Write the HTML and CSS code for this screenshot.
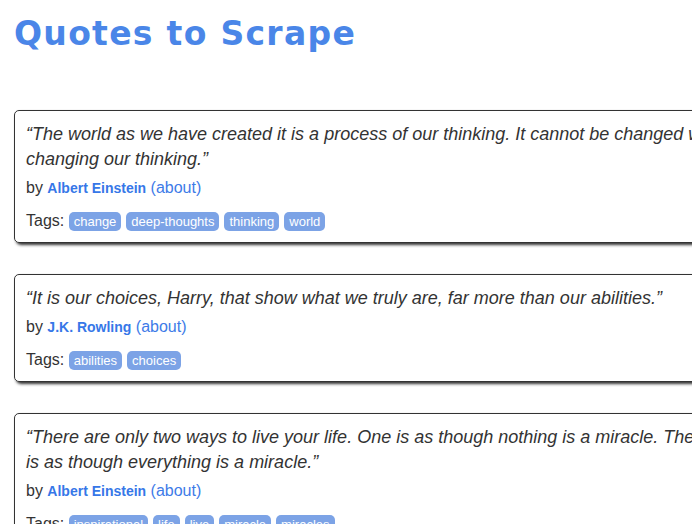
FILE: index.html
```html
<!DOCTYPE html>
<html>
<head>
<meta charset="utf-8">
<link rel="stylesheet" href="styles.css">
</head>
<body>
<div class="container">
  <h1 class="title">Quotes to Scrape</h1>
  <div class="quotes">
    <div class="quote">
      <span class="text">“The world as we have created it is a process of our thinking. It cannot be changed without changing our thinking.”</span>
      <span class="by">by <a class="author">Albert Einstein</a> <a class="about">(about)</a></span>
      <div class="tags">Tags: <a class="tag">change</a><a class="tag">deep-thoughts</a><a class="tag">thinking</a><a class="tag">world</a></div>
    </div>
    <div class="quote">
      <span class="text">“It is our choices, Harry, that show what we truly are, far more than our abilities.”</span>
      <span class="by">by <a class="author">J.K. Rowling</a> <a class="about">(about)</a></span>
      <div class="tags">Tags: <a class="tag">abilities</a><a class="tag">choices</a></div>
    </div>
    <div class="quote">
      <span class="text">“There are only two ways to live your life. One is as though nothing is a miracle. The other is as though everything is a miracle.”</span>
      <span class="by">by <a class="author">Albert Einstein</a> <a class="about">(about)</a></span>
      <div class="tags">Tags: <a class="tag">inspirational</a><a class="tag">life</a><a class="tag">live</a><a class="tag">miracle</a><a class="tag">miracles</a></div>
    </div>
  </div>
</div>
</body>
</html>
```

FILE: styles.css
```css
html, body {
  margin: 0;
  padding: 0;
  overflow: hidden;
  background: #fff;
}
body {
  font-family: "Liberation Sans", Arial, sans-serif;
  color: #333;
}
.container {
  width: 748px;
  padding: 0 14px;
}
.title {
  margin: 15px 0 0 0;
  font-family: "DejaVu Sans", sans-serif;
  font-weight: 700;
  font-size: 33px;
  line-height: 38px;
  color: #4a86e8;
  letter-spacing: 1.3px;
}
.quotes {
  margin-top: 57px;
}
.quote {
  border: 1px solid #333;
  border-radius: 5px;
  box-shadow: 2px 2px 3px #333;
  padding: 11px 11px 10px 11px;
  margin-bottom: 31px;
}
.text {
  display: block;
  font-style: italic;
  font-size: 18px;
  line-height: 25px;
  margin-bottom: 5px;
}
.by {
  display: block;
  font-size: 16px;
  line-height: 22px;
}
.author {
  color: #3677e8;
  font-weight: bold;
  font-size: 14px;
}
.about {
  color: #3e7be8;
}
.tags {
  margin-top: 11px;
  font-size: 16px;
  line-height: 22px;
}
.tag {
  display: inline-block;
  background: #7ca3e6;
  color: #fff;
  font-size: 13px;
  line-height: 19px;
  padding: 0 5px;
  border-radius: 5px;
  margin-right: 5px;
}
```
